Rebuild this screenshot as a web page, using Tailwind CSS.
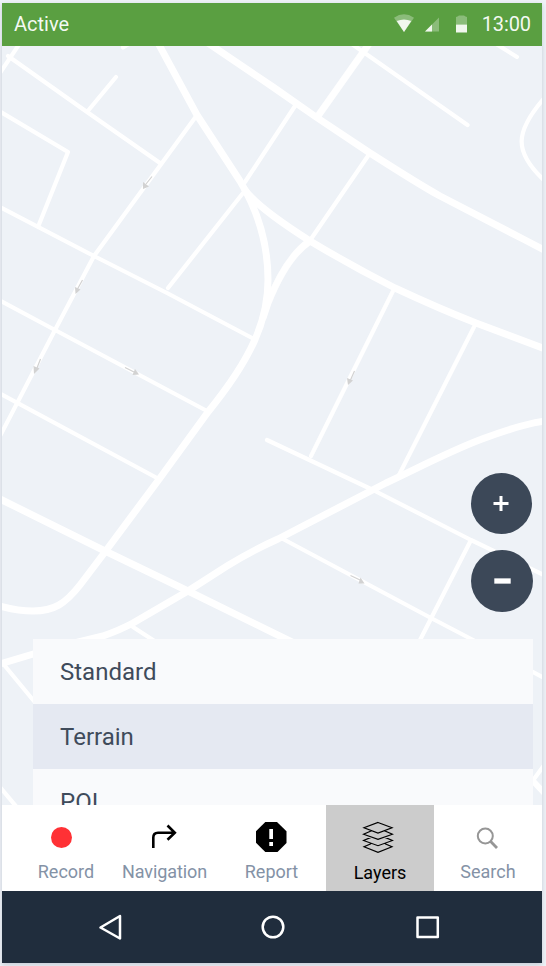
<!DOCTYPE html>
<html lang="en">
<head>
<meta charset="utf-8">
<title>Map</title>
<script src="https://cdn.jsdelivr.net/npm/@tailwindcss/browser@4"></script>
</head>
<body class="h-[966px] w-[546px] overflow-hidden bg-[#eff2f7] pt-[3px] pl-[2px] font-['Roboto',sans-serif]">
<main class="flex h-[960px] w-[540px] flex-col shadow-[0_2px_5px_rgba(50,75,100,0.22)]">
  <header class="flex h-[43px] shrink-0 items-center justify-between bg-[#5a9f41] pr-[11px] pb-[2px] pl-[12px] text-[20px] leading-none text-white/95">
    <span>Active</span>
    <div class="flex items-center">
      <svg class="mr-[15px] h-[20px] w-[74px]" viewBox="393 13.5 74 20">
        <path d="M394 17.2Q404 10.5 414 17.2L404 31.5Z" fill="#fff" fill-opacity=".3"/>
        <path d="M396.700 20.500Q404 17.500 411.300 20.500L404 31.500Z" fill="#f1f7ee"/>
        <path d="M425 31L439 17V31Z" fill="#fff" fill-opacity=".3"/>
        <path d="M425 31L432 24V31Z" fill="#f1f7ee"/>
        <path d="M456 24V16.500L457.500 16L459 15H464L465.500 16L467 16.500V24Z" fill="#fff" fill-opacity=".3"/>
        <path d="M456 24H467V32H456Z" fill="#f1f7ee"/>
      </svg>
      <span class="tracking-[-0.1px]">13:00</span>
    </div>
  </header>

  <section class="relative h-[759px] shrink-0 overflow-hidden bg-[#eef2f7]">
    <svg class="block h-[759px] w-[540px]" viewBox="2 46 540 759" fill="none" stroke="#fff" stroke-linecap="round" stroke-linejoin="round">
      <g stroke-width="7">
        <path d="M157 41L197 115L240 181C255 206 268 239 268 280C268 320 252 358 208 412L160 478L105 552L80 585C65 604 54 611 33 611C22 611 11 609 0 606"/>
        <path d="M205 41L273 87L316 117L370 153C395 169 420 185 440 196L525 240L548 252"/>
        <path d="M245 190Q258 208 310 241Q350 265 395 288Q440 309 476 323L548 350"/>
        <path d="M310 241C289 255 276 283 268 303L263 318"/>
        <path d="M371 41L318 116"/>
        <path d="M-2 498L105 551L188 591L300 646"/>
        <path d="M546 421C529 423 506 430 482 439C450 451 420 467 386 483L278 539C260 547 245 555 227 566L188 591L133 623Q120 630 103 636L50 649L0 664"/>
      </g>
      <path d="M546 795L533 781" stroke-width="6"/>
      <g stroke-width="4.200">
        <path d="M8 56L87 112L160 163M22 40L-2 76M116 77L87 112M123 47.500L132 42"/>
        <path d="M-1 111L68 152L38 227M-2 206L94 256L167 293L254 339"/>
        <path d="M197 115L105 241L94 256L55 330L-2 440M243 193L168 288M295 106L245 182M370 153L311 239"/>
        <path d="M349 42L467.500 125M493 42L517 57"/>
        <path d="M546 96C514 132 513 152 546 182"/>
        <path d="M-1 300L55 330L207 411M-1 393L157 478"/>
        <path d="M394 289L311 456M475 325L399 475"/>
        <path d="M267 440L373 490L471 540L546 576M471 540L417 646M283 539L431 618L475 641L546 679"/>
        <path d="M133 627L156 642M5 666L38 706M-1 786L20 811M545 764L534 779"/>
      </g>
      <g stroke="#d2d2d2" stroke-width="1.200" stroke-linecap="butt">
        <path d="M152 176.500L146 184M82.500 280L77.500 289M40.500 359L37 368M125 367.500L134 372M354.500 371L350.500 380M350.500 575.500L360 580"/>
        <g fill="#d2d2d2" stroke="none">
          <path d="M143 182L149 186.500L143 189Z"/>
          <path d="M75 287L80.500 289.500L75.500 294Z"/>
          <path d="M33.500 366L39.500 368.500L34 374Z"/>
          <path d="M135 369L139 374.500L132.500 375Z"/>
          <path d="M347 378L353 380.500L348 385Z"/>
          <path d="M360.500 577.500L364.500 583.500L358.500 583.500Z"/>
        </g>
      </g>
    </svg>
    <div class="absolute top-[427px] left-[469px] flex flex-col gap-[15.500px]">
      <button class="flex size-[61px] items-center justify-center rounded-full bg-[#3c4858]" aria-label="Zoom in">
        <svg class="-mt-px -ml-px size-[16px]" viewBox="0 0 16 16"><path d="M.5 8.500H15.500M8 1V16" stroke="#fff" stroke-width="3"/></svg>
      </button>
      <button class="flex size-[62.300px] items-center justify-center rounded-full bg-[#3c4858] pl-px" aria-label="Zoom out">
        <svg class="h-[6px] w-[17px]" viewBox="0 0 17 6"><path d="M.3 3H16.700" stroke="#fff" stroke-width="5.300"/></svg>
      </button>
    </div>
    <ul class="absolute top-[593px] left-[31px] w-[500px] text-[24px] text-[#3f4b5b]">
      <li class="flex h-[65px] items-center bg-[#f9fafc] pl-[27px]">Standard</li>
      <li class="flex h-[65px] items-center bg-[#e5e9f2] pl-[27px]">Terrain</li>
      <li class="flex h-[65px] items-center bg-[#f9fafc] pl-[27px]">POI</li>
    </ul>
  </section>

  <nav class="grid h-[86px] shrink-0 grid-cols-5 bg-white text-center text-[18px] leading-[22px] text-[#8492a6]">
    <div class="flex flex-col items-center pt-[16px] pl-[20px]">
      <svg class="mr-[9px] size-[32px]" viewBox="0 0 32 32"><circle cx="15.500" cy="16.500" r="10.500" fill="#ff3135"/></svg>
      <span class="mt-[8px]">Record</span>
    </div>
    <div class="flex flex-col items-center pt-[16px]">
      <svg class="size-[32px]" viewBox="148 821 32 32" fill="none" stroke="#000" stroke-width="2.600"><path d="M153.300 848V837.500Q153.300 832.700 158 832.700H175M167.500 825.500L174.800 832.700L167.500 839.700"/></svg>
      <span class="mt-[8px] pl-px tracking-[-0.1px]">Navigation</span>
    </div>
    <div class="flex flex-col items-center pt-[16px]">
      <svg class="size-[32px]" viewBox="256 821 32 32"><path d="M265.300 822H277L286.500 831.300V843L277.500 852H265.300L256 842.700V831.300Z"/><path d="M269.300 829H273V839H269.300ZM269.300 842H273V846H269.300Z" fill="#fff"/></svg>
      <span class="mt-[8px] pr-px">Report</span>
    </div>
    <div class="flex flex-col items-center bg-[#ccc] pt-[16px] text-black">
      <svg class="mr-[4px] size-[32px]" viewBox="362 821 32 32" fill="none" stroke="#000" stroke-width="1.200"><path d="M378 822.500L392 827.800L378 833L364 827.800ZM371 831L363.500 834.200L378 839.300L392.500 834.200L385 831M371 837.400L363.500 840.500L378 845.700L392.500 840.500L385 837.400M371 843.700L364 846.800L378 852.300L392 846.800L385 843.700"/></svg>
      <span class="mt-[9px]">Layers</span>
    </div>
    <div class="flex flex-col items-center pt-[16px]">
      <svg class="size-[32px]" viewBox="472 821 32 32" fill="none" stroke="#969696"><circle cx="485.300" cy="836" r="7.500" stroke-width="2"/><path d="M490.700 841.500L497 848" stroke-width="2.800"/></svg>
      <span class="mt-[8px]">Search</span>
    </div>
  </nav>

  <footer class="flex h-[72px] shrink-0 items-center bg-[#202d3d]">
    <svg class="h-[72px] w-[540px]" viewBox="2 891 540 72" fill="none" stroke="#fff" stroke-width="2.500" stroke-linejoin="round">
      <path d="M120 916L100.500 927.500L120 938.500Z"/>
      <circle cx="273" cy="927" r="10.300"/>
      <path d="M417.500 917.500H437.800V937H417.500Z"/>
    </svg>
  </footer>
</main>
</body>
</html>
